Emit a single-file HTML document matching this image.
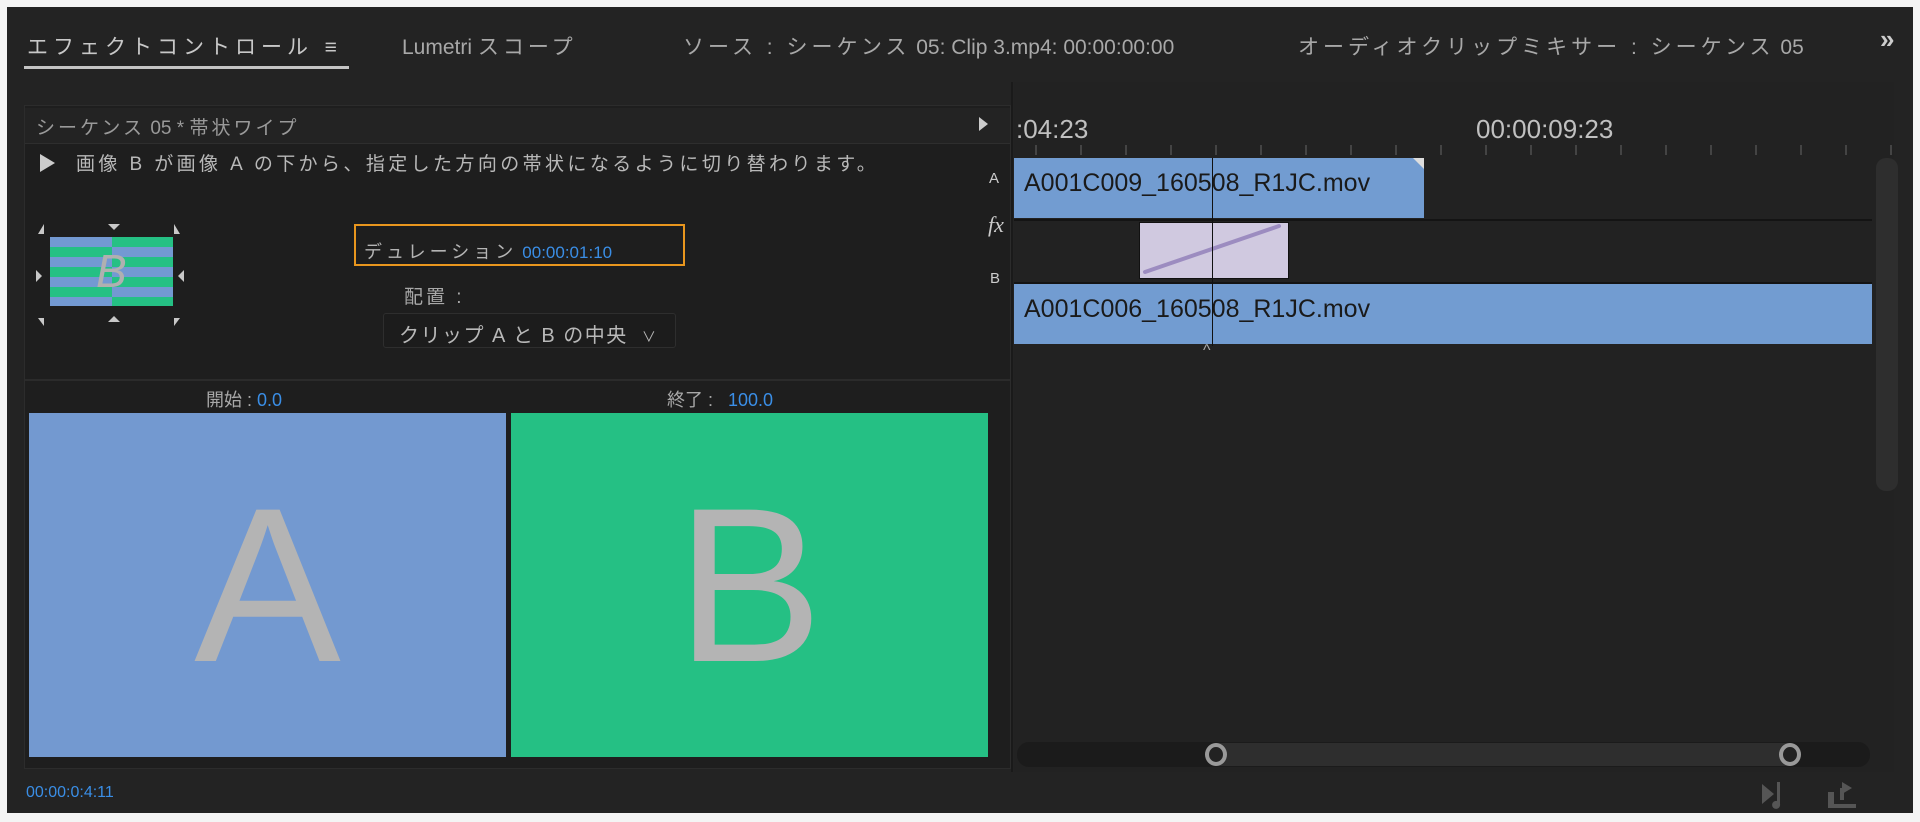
<!DOCTYPE html>
<html><head><meta charset="utf-8"><style>
*{margin:0;padding:0;box-sizing:border-box}
body{width:1920px;height:822px;background:#f4f4f4;position:relative;overflow:hidden;font-family:"Liberation Sans","Noto Sans CJK JP",sans-serif;color:#b0b0b0}
.a{position:absolute}
.win{left:7px;top:7px;width:1906px;height:806px;background:#232323}
.t{font-size:21px;white-space:nowrap;color:#a8a8a8}
.j{letter-spacing:4px}
.blue{color:#3a8ee6}
</style></head><body>
<div class="a win"></div>
<div class="a t" style="left:27px;top:31px;color:#c8c8c8"><span class="j" style="letter-spacing:5px">エフェクトコントロール</span>&nbsp; ≡</div>
<div class="a" style="left:24px;top:66px;width:325px;height:3px;background:#c4c4c4"></div>
<div class="a t" style="left:402px;top:31px">Lumetri <span class="j">スコープ</span></div>
<div class="a t" style="left:683px;top:31px"><span class="j">ソース : シーケンス</span> 05: Clip 3.mp4: 00:00:00:00</div>
<div class="a t" style="left:1298px;top:31px"><span class="j">オーディオクリップミキサー : シーケンス</span> 05</div>
<div class="a t" style="left:1880px;top:24px;font-size:26px;font-weight:bold;color:#ccc">»</div>

<div class="a" style="left:24px;top:105px;width:987px;height:664px;background:#1e1e1e;border:1px solid #2c2c2c"></div>
<div class="a" style="left:25px;top:108px;width:985px;height:36px;background:#232323;border-bottom:1px solid #2e2e2e"></div>
<div class="a t" style="left:36px;top:113px;font-size:19px;color:#9a9a9a"><span class="j" style="letter-spacing:3px">シーケンス</span> 05 * <span class="j" style="letter-spacing:3px">帯状ワイプ</span></div>
<div class="a" style="left:979px;top:117px;width:0;height:0;border-left:9px solid #ccc;border-top:7px solid transparent;border-bottom:7px solid transparent"></div>
<div class="a" style="left:40px;top:154px;width:0;height:0;border-left:15px solid #ccc;border-top:9px solid transparent;border-bottom:9px solid transparent"></div>
<div class="a t" style="left:76px;top:149px;font-size:19px;color:#b8b8b8;letter-spacing:3.4px">画像 B が画像 A の下から、指定した方向の帯状になるように切り替わります。</div>
<div class="a" style="left:50px;top:237px;width:62px;height:69px;background:repeating-linear-gradient(#7399d2 0 10px,#25c084 10px 20px)"></div>
<div class="a" style="left:112px;top:237px;width:61px;height:69px;background:repeating-linear-gradient(#25c084 0 10px,#7399d2 10px 20px)"></div>
<div class="a" style="left:96px;top:244px;font-size:46px;font-style:italic;color:#b0b0b0;font-family:'Liberation Sans',sans-serif">B</div>
<svg class="a" style="left:30px;top:218px" width="160" height="110">
<g fill="#c8c8c8"><polygon points="8,16 14,6 14,16"/><polygon points="78,6 90,6 84,12"/><polygon points="150,16 144,6 144,16"/>
<polygon points="6,52 12,58 6,64"/><polygon points="154,52 148,58 154,64"/>
<polygon points="8,100 14,100 14,108"/><polygon points="78,104 90,104 84,98"/><polygon points="150,100 144,100 144,108"/></g></svg>
<div class="a" style="left:354px;top:224px;width:331px;height:42px;border:2px solid #e8961e"></div>
<div class="a t" style="left:364px;top:238px;font-size:18px;color:#b4b4b4"><span style="letter-spacing:4px">デュレーション</span> <span class="blue" style="font-size:17px">00:00:01:10</span></div>
<div class="a t" style="left:404px;top:282px;font-size:19px;letter-spacing:3px">配置 :</div>
<div class="a" style="left:383px;top:313px;width:293px;height:35px;border:1px solid #2e2e2e;border-radius:3px;background:#1c1c1c"></div>
<div class="a t" style="left:399px;top:319px;font-size:20px;color:#b8b8b8;letter-spacing:1.5px">クリップ A と B の中央 &nbsp;<span style="font-size:14px">∨</span></div>
<div class="a" style="left:25px;top:379px;width:985px;height:2px;background:#2b2b2b"></div>
<div class="a t" style="left:206px;top:386px;font-size:18px">開始 : <span class="blue">0.0</span></div>
<div class="a t" style="left:667px;top:386px;font-size:18px">終了 : &nbsp;&nbsp;<span class="blue">100.0</span></div>
<div class="a" style="left:29px;top:413px;width:477px;height:344px;background:#7399d0;color:#b4b4b4;font-size:220px;text-align:center;line-height:344px">A</div>
<div class="a" style="left:511px;top:413px;width:477px;height:344px;background:#25c084;color:#b4b4b4;font-size:220px;text-align:center;line-height:344px">B</div>
<div class="a t blue" style="left:26px;top:784px;font-size:16px">00:00:0:4:11</div>

<div class="a" style="left:1011px;top:82px;width:2px;height:690px;background:#1a1a1a"></div>
<div class="a" style="left:1014px;top:82px;width:880px;height:690px;background:#222"></div>
<div class="a t" style="left:989px;top:170px;font-size:15px;color:#ccc">A</div>
<div class="a t" style="left:988px;top:212px;font-size:22px;font-style:italic;font-family:'Liberation Serif',serif;color:#ccc">fx</div>
<div class="a t" style="left:990px;top:270px;font-size:15px;color:#ccc">B</div>
<div class="a t" style="left:1016px;top:114px;font-size:26px;color:#c0c0c0">:04:23</div>
<div class="a t" style="left:1476px;top:114px;font-size:26px;color:#c0c0c0">00:00:09:23</div>
<svg class="a" style="left:1014px;top:143px" width="880" height="14"><g stroke="#666" stroke-width="1">
<line x1="22" y1="2" x2="22" y2="12"/><line x1="67" y1="2" x2="67" y2="12"/><line x1="112" y1="2" x2="112" y2="12"/><line x1="157" y1="2" x2="157" y2="12"/><line x1="202" y1="2" x2="202" y2="12"/><line x1="247" y1="2" x2="247" y2="12"/><line x1="292" y1="2" x2="292" y2="12"/><line x1="337" y1="2" x2="337" y2="12"/><line x1="382" y1="2" x2="382" y2="12"/><line x1="427" y1="2" x2="427" y2="12"/><line x1="472" y1="2" x2="472" y2="12"/><line x1="517" y1="2" x2="517" y2="12"/><line x1="562" y1="2" x2="562" y2="12"/><line x1="607" y1="2" x2="607" y2="12"/><line x1="652" y1="2" x2="652" y2="12"/><line x1="697" y1="2" x2="697" y2="12"/><line x1="742" y1="2" x2="742" y2="12"/><line x1="787" y1="2" x2="787" y2="12"/><line x1="832" y1="2" x2="832" y2="12"/><line x1="877" y1="2" x2="877" y2="12"/></g></svg>
<div class="a" style="left:1014px;top:158px;width:410px;height:60px;background:#729cd1"></div>
<div class="a" style="left:1413px;top:158px;width:0;height:0;border-top:11px solid #ddd;border-left:11px solid transparent"></div>
<div class="a" style="left:1024px;top:169px;font-size:25px;color:#1a1a1a;white-space:nowrap">A001C009_160508_R1JC.mov</div>
<div class="a" style="left:1014px;top:219px;width:858px;height:2px;background:#141414"></div>
<div class="a" style="left:1139px;top:222px;width:150px;height:57px;background:#d0c9e0;border:1px solid #111"></div>
<svg class="a" style="left:1139px;top:222px" width="150" height="57"><line x1="6" y1="50" x2="140" y2="4" stroke="#9c8cc0" stroke-width="4" stroke-linecap="round"/></svg>
<div class="a" style="left:1014px;top:282px;width:858px;height:2px;background:#141414"></div>
<div class="a" style="left:1014px;top:284px;width:858px;height:60px;background:#729cd1"></div>
<div class="a" style="left:1024px;top:295px;font-size:25px;color:#1a1a1a;white-space:nowrap">A001C006_160508_R1JC.mov</div>
<div class="a" style="left:1212px;top:158px;width:1px;height:188px;background:#111"></div>
<div class="a t" style="left:1203px;top:342px;font-size:16px;color:#aaa">^</div>
<div class="a" style="left:1876px;top:158px;width:22px;height:333px;background:#2e2e2e;border-radius:10px"></div>
<div class="a" style="left:1017px;top:742px;width:853px;height:25px;background:#1b1b1b;border-radius:12px"></div>
<div class="a" style="left:1216px;top:743px;width:574px;height:23px;background:#2e2e2e"></div>
<div class="a" style="left:1205px;top:743px;width:22px;height:23px;border:4px solid #999;border-radius:50%;background:#222"></div>
<div class="a" style="left:1779px;top:743px;width:22px;height:23px;border:4px solid #999;border-radius:50%;background:#222"></div>
<svg class="a" style="left:1760px;top:778px" width="140" height="34"><g fill="#555"><polygon points="2,6 14,16 2,26"/><path d="M17 4 h3 v22 a4 4 0 1 1 -3 -3 z"/>
<path d="M68 30 V14 H74 V26 H96 V30 Z M82 4 L92 10 L82 16 Z M80 10 H84 V22 H80Z"/></g></svg>
</body></html>
